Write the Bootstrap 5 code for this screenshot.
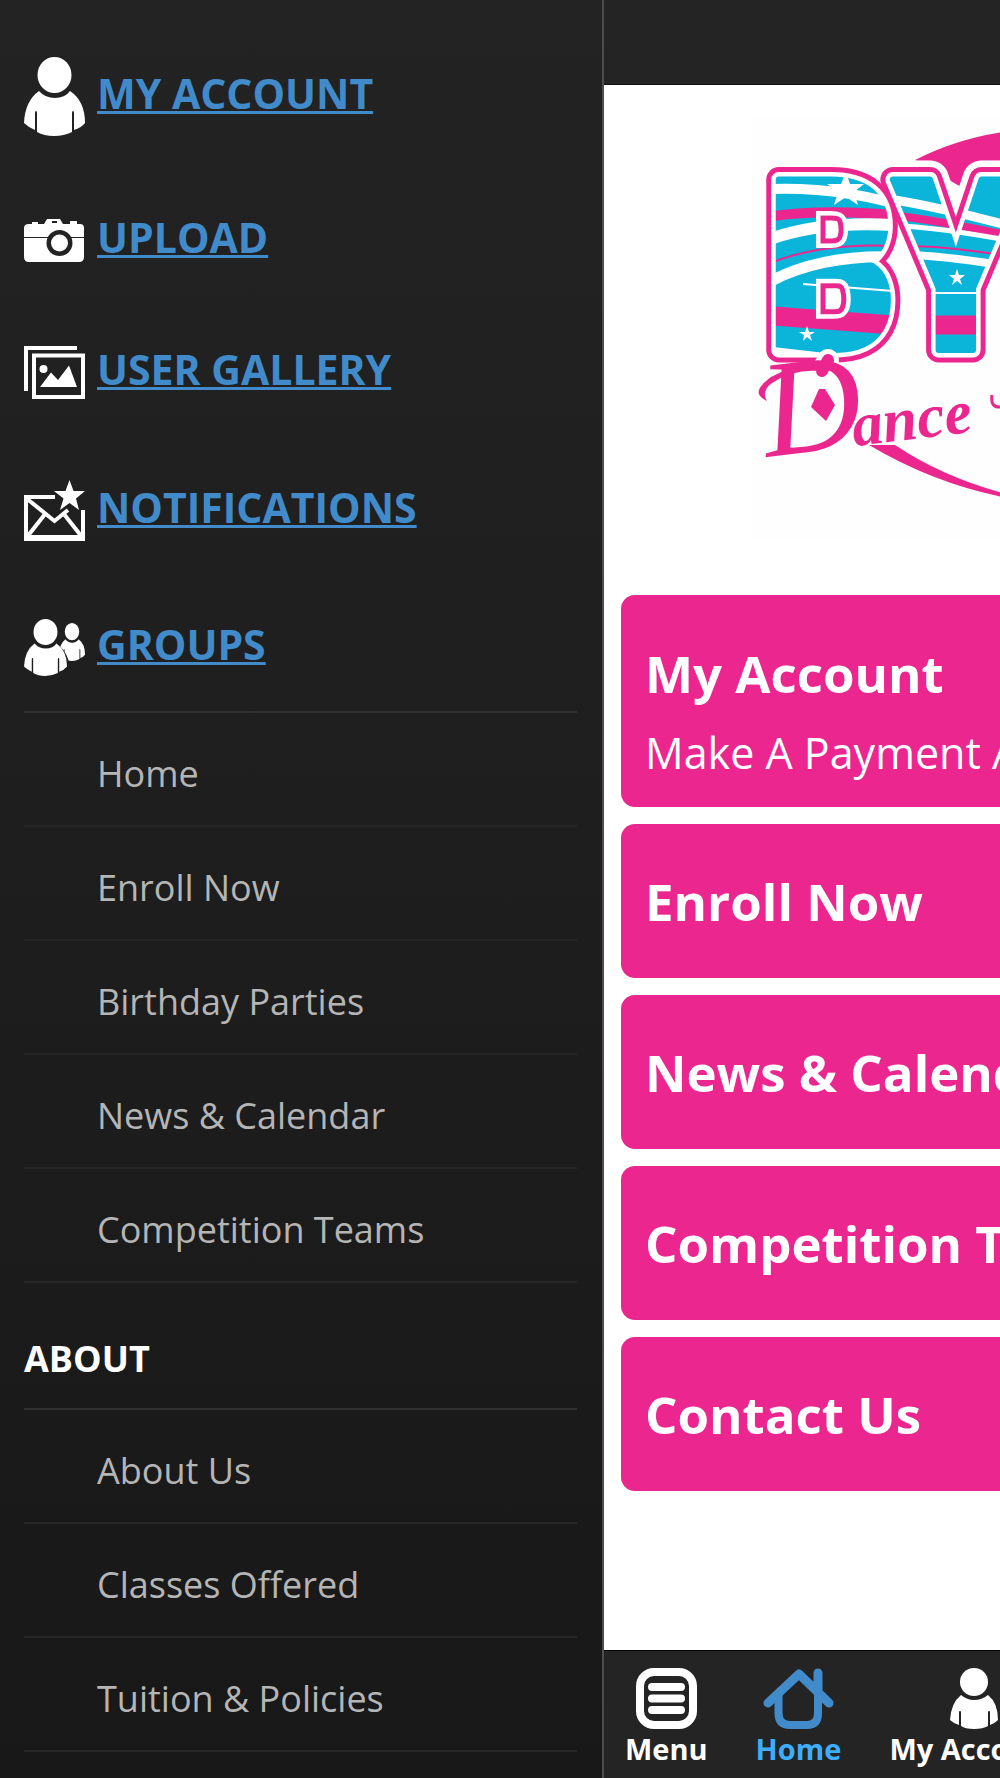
<!DOCTYPE html>
<html lang="en">
<head>
<meta charset="utf-8">
<meta name="viewport" content="width=device-width, initial-scale=1">
<title>BYD Dance</title>
<link href="https://cdn.jsdelivr.net/npm/bootstrap@5.3.0/dist/css/bootstrap.min.css" rel="stylesheet">
<style>
:root { --pink: #ec268f; --blue: #428bca; --cyan: #0bb4d9; }
body { font-family: "Open Sans", "Noto Sans", sans-serif; background: #fff; }
.app-shell { min-height: 100vh; overflow: hidden; }
.drawer { width: 604px; padding: 20px 25px 0 24px; border-right: 2px solid #4d4d4d; background: linear-gradient(#232323, #181818); color: #fff; }
.quick-link { gap: 12px; padding: 37px 0; font-size: 41px; line-height: 42px; font-weight: 700; color: var(--blue); text-transform: uppercase; text-decoration: none; }
.quick-link span { padding-bottom: 8px; text-decoration: underline; text-decoration-thickness: 3px; text-underline-offset: 2px; text-decoration-skip-ink: none; }
.quick-link:hover, .page-link-row:hover { color: #6fb2ea; }
.groups-icon { margin: -2px 0; }
.drawer-title { padding: 58px 0 31px; font-size: 36px; line-height: 36px; font-weight: 700; }
.ruled { border-top: 2px solid #303030; }
.page-link-row { display: block; padding: 43px 0 33px 73px; font-size: 36px; line-height: 36px; color: #b5b5b5; text-decoration: none; border-bottom: 2px solid #262626; }
.stage { min-width: 722px; background: #fff; }
.topbar { height: 85px; background: #242424; border-bottom: 1px solid #111; }
.logo-box { width: 424px; height: 424px; margin: 32px auto 54px; background: #fefefe; }
.logo-caps { font-family: "Roboto Condensed", Roboto, sans-serif; font-weight: 700; font-size: 239px; stroke-linejoin: round; }
.tiles { gap: 17px; padding: 0 17px; }
.tile { min-height: 154px; padding: 24px; border-radius: 14px; background: var(--pink); color: #fff; text-decoration: none; }
.tile:hover { color: #fff; }
.tile-name { font-size: 51px; line-height: 60px; font-weight: 700; }
.tile-note { font-size: 43px; line-height: 60px; padding-top: 20px; }
.tile-tall { min-height: 211px; padding-top: 48px; }
.tabbar { gap: 48px; height: 128px; padding: 17px 21px 0; background: #242424; border-top: 1px solid #000; }
.tab-item { font-size: 29px; line-height: 34px; font-weight: 700; color: #fff; text-decoration: none; gap: 3px; }
.tab-item.active { color: #3daefd; }
</style>
</head>
<body>
<svg width="0" height="0" class="position-absolute" aria-hidden="true">
  <defs>
    <symbol id="person" viewBox="0 0 61 79">
      <ellipse cx="30.500" cy="18" rx="17" ry="18"/>
      <path d="M15 34 Q21 41 31 41 Q41 41 46 34 Q61 44 61 66 Q57 71 50 73 V56 Q50 54 49 54 Q48 54 48 56 V75 Q40 79 30 79 Q20 79 13 75 V56 Q13 54 12 54 Q11 54 11 56 V73 Q4 70 0 66 Q1 44 15 34Z"/>
    </symbol>
    <symbol id="person-round" viewBox="0 0 48 61">
      <circle cx="24" cy="14" r="14"/>
      <path d="M11 27 Q17 32 24 32 Q32 32 38 27 Q48 35 48 52 Q44 56 40 57 V44 Q40 43 39 43 Q38 43 38 44 V58 Q33 61 24 61 Q15 61 11 58 V44 Q11 43 10 43 Q9 43 9 44 V57 Q3 55 0 52 Q1 35 11 27Z"/>
    </symbol>
  </defs>
</svg>
<div class="app-shell d-flex">
  <nav class="drawer flex-shrink-0" aria-label="Main menu">
    <a class="quick-link d-flex align-items-center" href="#"><svg width="61" height="79" fill="#fff"><use href="#person"/></svg><span>My Account</span></a>
    <a class="quick-link d-flex align-items-center" href="#"><svg width="61" height="61" viewBox="0 0 61 61"><path fill="#fff" d="M8 14V12H14V14H20L23 9H36L39 14H46V11H53V14H56Q60 14 60 18V47Q60 52 55 52H5Q0 52 0 47V18Q0 14 5 14Z"/><path fill="#232323" d="M28 11H33V13H28ZM0 27H60V28H0Z"/><circle cx="35.500" cy="33" r="13" fill="#232323"/><circle cx="35.500" cy="33" r="8.500" fill="#fff"/></svg><span>Upload</span></a>
    <a class="quick-link d-flex align-items-center" href="#"><svg width="61" height="55" viewBox="0 0 61 55"><path fill="#fff" fill-rule="evenodd" d="M0 1H53V5H4V46H0ZM8 8.500H61V54H8ZM12 12.500V50H57V12.500ZM16 42 L27 27.500L34 35L45 20.500L53 42Z"/><circle cx="19.500" cy="24" r="4" fill="#fff"/></svg><span>User Gallery</span></a>
    <a class="quick-link d-flex align-items-center" href="#"><svg width="61" height="73" viewBox="0 0 61 73"><path d="M31 23H2V65H59V36" fill="none" stroke="#fff" stroke-width="4"/><path d="M2 24L30.500 47L44 36M21.500 39.500L3 63M39.500 39.500L58 63M3 63H58" fill="none" stroke="#fff" stroke-width="4"/><path fill="#fff" d="M45.500 6L49.500 17H61L52 24.500L55 36L45.500 29L36 36L39.500 24.500L30 17H41.500Z"/></svg><span>Notifications</span></a>
    <a class="quick-link d-flex align-items-center" href="#"><svg width="61" height="57" viewBox="0 0 61 57" class="groups-icon" fill="#fff"><svg x="35" y="4" width="26" height="38" viewBox="0 0 61 79" preserveAspectRatio="none"><use href="#person"/></svg><path d="M30 26Q43 34 44 54" fill="none" stroke="#1f1f1f" stroke-width="5"/><svg width="43" height="57" viewBox="0 0 61 79" preserveAspectRatio="none"><use href="#person"/></svg></svg><span>Groups</span></a>
    <div class="ruled">
      <a class="page-link-row" href="#">Home</a>
      <a class="page-link-row" href="#">Enroll Now</a>
      <a class="page-link-row" href="#">Birthday Parties</a>
      <a class="page-link-row" href="#">News &amp; Calendar</a>
      <a class="page-link-row" href="#">Competition Teams</a>
    </div>
    <h2 class="drawer-title m-0">ABOUT</h2>
    <div class="ruled">
      <a class="page-link-row" href="#">About Us</a>
      <a class="page-link-row" href="#">Classes Offered</a>
      <a class="page-link-row" href="#">Tuition &amp; Policies</a>
    </div>
  </nav>

  <div class="stage flex-grow-1 d-flex flex-column">
    <header class="topbar"></header>
    <main class="flex-grow-1">
      <div class="logo-box">
        <svg width="424" height="424" viewBox="0 0 424 424" role="img" aria-label="BYD Dance">
          <defs>
            <pattern id="stripesB" patternUnits="userSpaceOnUse" width="424" height="424">
              <rect width="424" height="424" fill="#0bb4d9"/>
              <g fill="none">
                <path d="M20 72Q90 70 160 92" stroke="#fff" stroke-width="10"/>
                <path d="M20 99Q70 92 140 98" stroke="#ec268f" stroke-width="10"/>
                <path d="M20 121Q70 104 140 108" stroke="#fff" stroke-width="12"/>
                <path d="M20 145Q70 126 140 129" stroke="#ec268f" stroke-width="2"/>
                <path d="M20 163Q70 138 140 140" stroke="#fff" stroke-width="11"/>
                <path d="M50 167L140 174" stroke="#fff" stroke-width="2"/>
                <path d="M20 199L140 208" stroke="#ec268f" stroke-width="19"/>
                <path d="M20 230L90 238V250H20Z" fill="#fff"/>
              </g>
              <path fill="#fff" d="M93 55L97 67L111 67L101 75L105 88L93 80L81 88L85 75L74 67L88 67ZM54 209L56 215L62 215L57 218L59 224L54 220L50 224L51 218L46 215L52 215Z"/>
            </pattern>
            <pattern id="stripesY" patternUnits="userSpaceOnUse" width="424" height="424">
              <rect width="424" height="424" fill="#0bb4d9"/>
              <g fill="none">
                <path d="M135 82Q190 90 290 118" stroke="#fff" stroke-width="9"/>
                <path d="M145 99Q190 104 290 126" stroke="#ec268f" stroke-width="8"/>
                <path d="M150 109Q200 112 290 130" stroke="#fff" stroke-width="5"/>
                <path d="M160 129Q200 130 260 140" stroke="#ec268f" stroke-width="2"/>
                <path d="M160 138Q200 140 260 150" stroke="#fff" stroke-width="8"/>
                <path d="M170 176H250" stroke="#fff" stroke-width="2"/>
                <path d="M170 208H250" stroke="#ec268f" stroke-width="19"/>
              </g>
              <path fill="#fff" d="M204 152L206 158L212 158L207 162L209 168L204 164L199 168L201 162L196 158L202 158Z"/>
            </pattern>
            <text id="logoB" class="logo-caps" x="12" y="233">B</text>
            <text id="logoY" class="logo-caps" x="138" y="233">Y</text>
          </defs>
          <path fill="#ec268f" d="M162 43Q203 22 250 15H424V60H230L208 70Z"/>
          <g fill="#fff" stroke="#fff" stroke-width="38"><use href="#logoB"/><use href="#logoY"/></g>
          <g fill="#ec268f" stroke="#ec268f" stroke-width="25"><use href="#logoB"/><use href="#logoY"/></g>
          <g fill="#fff" stroke="#fff" stroke-width="15"><use href="#logoB"/><use href="#logoY"/></g>
          <use href="#logoB" fill="url(#stripesB)" stroke="url(#stripesB)" stroke-width="6"/>
          <use href="#logoY" fill="url(#stripesY)" stroke="url(#stripesY)" stroke-width="6"/>
          <path fill="#ec268f" d="M116 328Q180 366 250 380L250 376Q190 360 142 328Z"/>
          <path d="M75 243L70 252" stroke="#fff" stroke-width="22" stroke-linecap="round"/>
          <path d="M75 243L69 254" stroke="#ec268f" stroke-width="12" stroke-linecap="round"/>
          <path fill="#ec268f" d="M14 284C0 277 5 270 18 260Q42 246 70 247L66 254Q40 252 19 266Q8 274 14 284Z"/>
          <text transform="rotate(-7 14 338)" x="14" y="340" fill="#ec268f" font-family="'Liberation Serif',serif" font-style="italic" font-weight="400" font-size="62"><tspan font-size="138">D</tspan><tspan font-weight="700" dx="-12">ance</tspan></text>
          <path fill="#ec268f" d="M66 272L72 272L82 288L73 304L58 290Z"/>
          <path d="M239 278Q237 291 248 290" fill="none" stroke="#ec268f" stroke-width="3"/>
        </svg>
      </div>
      <div class="tiles d-flex flex-column">
        <a class="tile tile-tall d-flex flex-column justify-content-center" href="#"><span class="tile-name">My Account</span><span class="tile-note text-nowrap">Make A Payment And More</span></a>
        <a class="tile d-flex flex-column justify-content-center" href="#"><span class="tile-name">Enroll Now</span></a>
        <a class="tile d-flex flex-column justify-content-center" href="#"><span class="tile-name">News &amp; Calendar</span></a>
        <a class="tile d-flex flex-column justify-content-center" href="#"><span class="tile-name">Competition Teams</span></a>
        <a class="tile d-flex flex-column justify-content-center" href="#"><span class="tile-name">Contact Us</span></a>
      </div>
    </main>
    <nav class="tabbar d-flex" aria-label="Tabs">
      <a class="tab-item d-flex flex-column align-items-center" href="#"><svg width="61" height="61" viewBox="0 0 61 61" fill="none" stroke="#fff"><rect x="4" y="4" width="53" height="53" rx="14" stroke-width="8"/><path d="M16 19H45M16 30.500H45M16 42H45" stroke-width="8" stroke-linecap="round"/></svg><span>Menu</span></a>
      <a class="tab-item active d-flex flex-column align-items-center" href="#"><svg width="71" height="61" viewBox="0 0 71 61" fill="none" stroke="#428bca" stroke-width="8" stroke-linecap="round" stroke-linejoin="round"><path d="M5 35L36 6L66 35M55 5V22" stroke-width="9"/><path d="M15.500 28V45Q15.500 57 27 57H44Q55 57 55 45V28"/></svg><span>Home</span></a>
      <a class="tab-item d-flex flex-column align-items-center text-nowrap" href="#"><svg width="48" height="61" fill="#fff"><use href="#person-round"/></svg><span>My Account</span></a>
    </nav>
  </div>
</div>
<script src="https://cdn.jsdelivr.net/npm/bootstrap@5.3.0/dist/js/bootstrap.bundle.min.js"></script>
</body>
</html>
